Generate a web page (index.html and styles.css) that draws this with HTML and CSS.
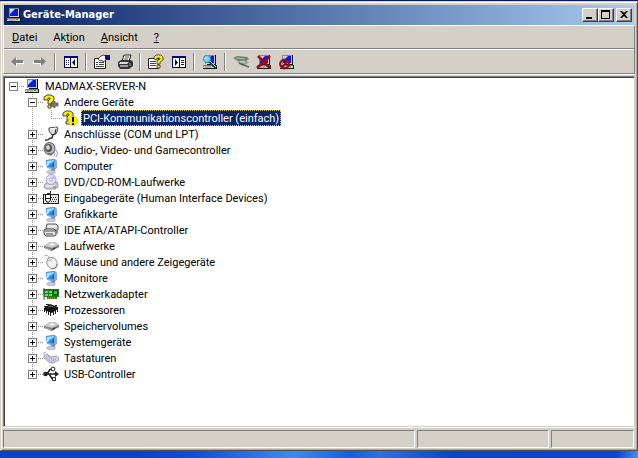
FILE: index.html
```html
<!DOCTYPE html>
<html lang="de">
<head>
<meta charset="utf-8">
<title>Geräte-Manager</title>
<link rel="stylesheet" href="styles.css">
</head>
<body>
<svg class="sprite" aria-hidden="true">
  <symbol id="pc" viewBox="0 0 16 16">
    <path d="M3 1H13V10H3Z" fill="#d4d0c8"/><path d="M3 1H13V2H4V10H3Z" fill="#888"/>
    <path d="M4 2H12V9H4Z" fill="#0818e8"/><path d="M4 2H9L4 7Z" fill="#b8d8ff"/>
    <path d="M13 1H14V11H5V10H13Z" fill="#111"/>
    <path d="M2 11H14V14H1V12Z" fill="#d4d0c8"/><path d="M2 11H14V12H2V13H1V12Z" fill="#777"/><path d="M1 14H15V15H1ZM14 11H15V15H14Z" fill="#111"/>
    <path d="M10 12H12V13H10Z" fill="#18b018"/><path d="M3 13H9" stroke="#888"/>
  </symbol>
  <symbol id="question" viewBox="0 0 16 16">
    <path d="M8 9L12 7V9H15V12H12V14L8 12Z" fill="#777" stroke="#444" stroke-width=".6"/>
    <path d="M1 5V3L4 1H8L11 3V6L8 9V10H5V7L7 5V4H5V6H1ZM5 11H8V14H5Z" fill="#fff200" stroke="#333" stroke-width=".9"/>
  </symbol>
  <symbol id="warning" viewBox="0 0 16 16">
    <path d="M1 5V3L4 1H8L11 3V6L8 9V10H5V7L7 5V4H5V6H1ZM4 11H8V14H4Z" fill="#fff200" stroke="#333" stroke-width=".9"/>
    <circle cx="11" cy="11" r="4.7" fill="#fff200" stroke="#b9ad00" stroke-width=".5"/>
    <path d="M10 7H12V12H10ZM10 13H12V15H10Z" fill="#111"/>
  </symbol>
  <symbol id="port" viewBox="0 0 16 16">
    <path d="M6 2L14 1L15 3L13 8L9 9L6 5Z" fill="#ddd" stroke="#444"/><path d="M7 3L13 2" stroke="#fff"/>
    <path d="M13 3L12 8L9 9" fill="none" stroke="#222"/>
    <path d="M10 9L9 12Q6 12 6 13T2 14" fill="none" stroke="#333" stroke-width="1.5"/>
  </symbol>
  <symbol id="audio" viewBox="0 0 16 16">
    <ellipse cx="6.500" cy="6.500" rx="5.500" ry="6" fill="#b8b8bc" stroke="#55555a"/>
    <ellipse cx="5.500" cy="6" rx="3.500" ry="4" fill="#55555a"/><ellipse cx="5" cy="5.500" rx="1.800" ry="2.200" fill="#ddd"/>
    <path d="M2 11L8 14L11 11" fill="#777"/><path d="M11 9Q13 11 11 14M13 8Q16 12 13 15" fill="none" stroke="#7f9dcc"/>
  </symbol>
  <symbol id="monitor" viewBox="0 0 16 16">
    <path d="M3 2L12 1L14 3V10L11 12L4 10Z" fill="#9aa9ca"/>
    <path d="M3 2L12 1L11 10L4 9Z" fill="#3296ee"/><path d="M4 3L11 2L10 4Q7 4 5 8H4Z" fill="#9ee8ff"/>
    <path d="M8 8L11 4V9Z" fill="#1267cf"/>
    <path d="M8 11L12 10V13L8 14Z" fill="#7885ad"/><ellipse cx="8" cy="14" rx="4.500" ry="1.700" fill="#c6cae2" stroke="#9298ba" stroke-width=".5"/>
  </symbol>
  <symbol id="disc" viewBox="0 0 16 16">
    <path d="M2 10L5 8H14L15 11V13L12 15H3L1 13Z" fill="#cccbd2" stroke="#77777f" stroke-width=".7"/>
    <circle cx="8" cy="5.500" r="5" fill="#e0e0f4" stroke="#9696b5" stroke-width=".8"/>
    <path d="M8 5L11 1L13 5Z" fill="#c5b9ef"/><circle cx="8" cy="5.500" r="1.500" fill="#fff" stroke="#8686a8" stroke-width=".6"/>
    <path d="M3 12H12" stroke="#fff"/><path d="M10 13H13" stroke="#666"/>
  </symbol>
  <symbol id="hid" viewBox="0 0 16 16">
    <path d="M0 4H16V14H0Z" fill="#222"/><path d="M1 5H15V13H1Z" fill="#e4e4e4"/>
    <path d="M8 7.500H14M9 9.500H14M8 11.500H14" stroke="#333" stroke-dasharray="1 1"/>
    <path d="M4.500 5V3.500H7.500V1" fill="none" stroke="#222"/><path d="M2.500 5V10L4 12H6L7.500 10V5" fill="#fff" stroke="#111"/><path d="M2 8.500H7" stroke="#111"/>
  </symbol>
  <symbol id="ide" viewBox="0 0 16 16">
    <path d="M4 2H13L15 4V8H5L3 6Z" fill="#ddd" stroke="#555"/><path d="M5 4H13" stroke="#fff"/>
    <path d="M2 7H11L13 9V13L11 14H3L1 12V8Z" fill="#e3e3e3" stroke="#444"/><path d="M2 9H12M3 12H10" stroke="#555"/><path d="M13 9L15 7V11L12 14" fill="#888"/>
  </symbol>
  <symbol id="drive" viewBox="0 0 16 16">
    <path d="M1 8L7 4H12L16 7V9L9 13L1 10Z" fill="#777"/><path d="M1 8L7 4H12L16 7L9 10Z" fill="#c9c9c9"/>
    <path d="M6 6L10 5L12 7L9 8Z" fill="#eee"/><path d="M2 9L8 11V12L2 10Z" fill="#aaa"/><path d="M10 11L12 10" stroke="#222"/>
  </symbol>
  <symbol id="mouse" viewBox="0 0 16 16">
    <path d="M1 2Q5 0 6 4" fill="none" stroke="#aaa"/>
    <ellipse cx="9" cy="9" rx="5" ry="6" transform="rotate(-25 9 9)" fill="#f1f1f2" stroke="#99999c"/>
    <path d="M4 7Q8 8 10 4M6 4L8 7" fill="none" stroke="#aaa" stroke-width=".8"/><path d="M9 15Q14 14 14 10" fill="none" stroke="#777"/>
  </symbol>
  <symbol id="network" viewBox="0 0 16 16">
    <path d="M0 3H16V11H14V13H4V11H1Z" fill="#147b20"/><path d="M2 5H5V7H2ZM6 5H9V7H6ZM2 8H5V10H2ZM6 8H9V10H6Z" fill="#76dd45"/>
    <path d="M10 4H15V9H10Z" fill="#075012"/><path d="M11 5H14V8H11Z" fill="#58b847"/><path d="M5 12H13" stroke="#e3c634" stroke-dasharray="1 1"/><path d="M1 2V14" stroke="#555"/>
  </symbol>
  <symbol id="cpu" viewBox="0 0 16 16">
    <path d="M1.500 6V10M3.500 7V11M5.500 9V13M7.500 10V14M10.500 10V13M12.500 8V12M14.500 7V10M1 4.500H4M3 2.500H6M12 3.500H14" stroke="#222"/>
    <path d="M1 6L7 2L15 5V7L9 11L1 8Z" fill="#151515"/><path d="M5 5L8 4L10 5" fill="none" stroke="#666"/>
  </symbol>
  <symbol id="keyboard" viewBox="0 0 16 16">
    <path d="M1 6L4 4L8 7L13 6L16 8V10L10 13H7L1 8Z" fill="#d7d7ec" stroke="#8383a8" stroke-width=".8"/>
    <path d="M3 6L8 10H13M5 6L9 9H14M3 8L7 11H12" fill="none" stroke="#9292b2" stroke-dasharray="1 1"/><path d="M1 5Q0 2 3 2" fill="none" stroke="#aaa"/>
  </symbol>
  <symbol id="usb" viewBox="0 0 16 16">
    <path d="M2 8H14M4 8L7 3.500H10M6 8L9 12.500H11" fill="none" stroke="#222" stroke-width="1.600"/>
    <circle cx="2.500" cy="8" r="2.300" fill="#222"/><path d="M12 5L16 8L12 11Z" fill="#222"/><circle cx="10" cy="3" r="1.900" fill="#fff" stroke="#222"/><path d="M9.500 11.500H12.500V14.500H9.500Z" fill="#fff" stroke="#222"/>
  </symbol>
  <symbol id="arrow" viewBox="0 0 16 16">
    <path d="M3 8L8 4V7H15V10H8V13Z" fill="#fff"/><path d="M2 7.500L7 3V6H14V9H7V12Z" fill="#808080"/>
  </symbol>
  <symbol id="panel" viewBox="0 0 16 16">
    <path d="M1 2H15V14H1Z" fill="#fff"/><path d="M1 2H15V14H1ZM2 4V13H7V4ZM8 4V13H14V4Z" fill="#000080" fill-rule="evenodd"/>
    <path d="M3 6.500H6M3 8.500H6M3 10.500H6" stroke="#222" stroke-dasharray="1 1"/><path d="M12 5V12L9 8.500Z" fill="#111"/>
  </symbol>
  <symbol id="props" viewBox="0 0 16 16">
    <path d="M.5 4.500H11.500V14.500H.5Z" fill="#fff" stroke="#222"/><path d="M2 8.500H4M5 8.500H10M2 10.500H4M5 10.500H10M2 12.500H10" stroke="#444"/>
    <path d="M4 5L7 2L10 1L12 3V6L9 8L8 6L6 7L5 6Z" fill="#fff" stroke="#222" stroke-width=".8"/><path d="M11 1H16V6H13L11 5Z" fill="#101080"/>
  </symbol>
  <symbol id="printer" viewBox="0 0 16 16">
    <path d="M5 7L7 1H14L12 7Z" fill="#fff" stroke="#222"/><path d="M8 3H12M7 5H11" stroke="#555"/>
    <path d="M1 8L4 6H14L16 8V12L12 15H3L1 12Z" fill="#333"/><path d="M3 8H12L10 10H2Z" fill="#ddd"/><path d="M3 12H11" stroke="#fff"/><path d="M13 9V12" stroke="#999"/>
  </symbol>
  <symbol id="help" viewBox="0 0 16 16">
    <path d="M.5 4.500H10.500V14.500H.5Z" fill="#fff" stroke="#222"/><path d="M2 7.500H8M2 9.500H8M2 11.500H8" stroke="#444"/>
    <path d="M6 5V3L8 1H13L15 3V6L12 8V10H9V7L12 5V4H9V6ZM9 11H12V14H9Z" fill="#fff200" stroke="#333" stroke-width=".8"/>
  </symbol>
  <symbol id="panelright" viewBox="0 0 16 16">
    <path d="M1 2H15V14H1Z" fill="#fff"/><path d="M1 2H15V14H1ZM2 4V13H8V4ZM9 4V13H14V4Z" fill="#000080" fill-rule="evenodd"/>
    <path d="M10 6.500H13M10 8.500H13M10 10.500H13" stroke="#222"/><path d="M4 5V12L7 8.500Z" fill="#111"/>
  </symbol>
  <symbol id="scan" viewBox="0 0 16 16">
    <use href="#pc"/><path d="M7 7L14 14" stroke="#104878" stroke-width="2.500"/><path d="M8 7L14 13" stroke="#8de0ef"/>
    <circle cx="5" cy="5" r="3.500" fill="#72d9ee" stroke="#458aa8"/><path d="M3 5L5 3" stroke="#fff"/>
  </symbol>
  <symbol id="update" viewBox="0 0 16 16">
    <path d="M0 4L4 2L14 3L16 5L13 7L5 7Z" fill="#668466"/><path d="M3 4L12 5" stroke="#aac0aa"/>
    <path d="M4 8L10 6L16 8L12 11L7 10Z" fill="#999"/><path d="M7 8L12 8" stroke="#ddd"/><path d="M8 10L16 13M6 9L10 11" stroke="#556655" stroke-width="1.500"/>
  </symbol>
  <symbol id="remove" viewBox="0 0 16 16">
    <use href="#pc"/><path d="M2 2L14 14M14 2L1 14" stroke="#a00814" stroke-width="2.600"/>
  </symbol>
  <symbol id="disable" viewBox="0 0 16 16">
    <use href="#pc"/><circle cx="5.500" cy="10" r="4.300" fill="none" stroke="#a00814" stroke-width="2.200"/><path d="M3 13L9 7" stroke="#a00814" stroke-width="2.200"/>
  </symbol>
</svg>
<main class="window">
  <header class="titlebar">
    <svg class="icon"><use href="#pc"/></svg>
    <h1>Geräte-Manager</h1>
    <div class="controls">
      <button aria-label="Minimieren"><svg viewBox="0 0 12 10"><path d="M2 7H8V9H2Z"/></svg></button>
      <button aria-label="Maximieren"><svg viewBox="0 0 12 10"><path d="M1 0H10V9H1ZM2 2V8H9V2Z" fill-rule="evenodd"/></svg></button>
      <button class="close" aria-label="Schließen"><svg viewBox="0 0 12 10"><path d="M2 1H4L6 3L8 1H10L7 4.500L10 8H8L6 6L4 8H2L5 4.500Z"/></svg></button>
    </div>
  </header>
  <div class="bars">
    <nav class="menu">
      <button><u>D</u>atei</button><button>Ak<u>t</u>ion</button><button><u>A</u>nsicht</button><button><u>?</u></button>
    </nav>
    <div class="toolbar" role="toolbar" aria-label="Symbolleiste">
      <button aria-label="Zurück"><svg class="icon"><use href="#arrow"/></svg></button>
      <button aria-label="Vorwärts"><svg class="icon flip"><use href="#arrow"/></svg></button>
      <span class="sep"></span>
      <button aria-label="Konsolenstruktur"><svg class="icon"><use href="#panel"/></svg></button>
      <span class="sep"></span>
      <button aria-label="Eigenschaften"><svg class="icon"><use href="#props"/></svg></button>
      <button aria-label="Drucken"><svg class="icon"><use href="#printer"/></svg></button>
      <span class="sep"></span>
      <button aria-label="Hilfe"><svg class="icon"><use href="#help"/></svg></button>
      <button aria-label="Aktionsbereich"><svg class="icon"><use href="#panelright"/></svg></button>
      <span class="sep"></span>
      <button aria-label="Nach geänderter Hardware suchen"><svg class="icon"><use href="#scan"/></svg></button>
      <span class="sep"></span>
      <button aria-label="Treiber aktualisieren"><svg class="icon"><use href="#update"/></svg></button>
      <button aria-label="Deinstallieren"><svg class="icon"><use href="#remove"/></svg></button>
      <button aria-label="Deaktivieren"><svg class="icon"><use href="#disable"/></svg></button>
    </div>
  </div>
  <section class="content">
    <ul class="tree">
      <li>
        <div class="row root"><span class="twig"><button class="toggle" aria-label="Zuklappen"></button></span><svg class="icon"><use href="#pc"/></svg><span class="label">MADMAX-SERVER-N</span></div>
        <ul>
          <li>
            <div class="row"><span class="twig"><button class="toggle" aria-label="Zuklappen"></button></span><svg class="icon"><use href="#question"/></svg><span class="label">Andere Geräte</span></div>
            <ul class="through">
              <li><div class="row last"><span class="twig"></span><svg class="icon"><use href="#warning"/></svg><span class="label selected">PCI-Kommunikationscontroller (einfach)</span></div></li>
            </ul>
          </li>
          <li><div class="row"><span class="twig"><button class="toggle plus" aria-label="Aufklappen"></button></span><svg class="icon"><use href="#port"/></svg><span class="label">Anschlüsse (COM und LPT)</span></div></li>
          <li><div class="row"><span class="twig"><button class="toggle plus" aria-label="Aufklappen"></button></span><svg class="icon"><use href="#audio"/></svg><span class="label">Audio-, Video- und Gamecontroller</span></div></li>
          <li><div class="row"><span class="twig"><button class="toggle plus" aria-label="Aufklappen"></button></span><svg class="icon"><use href="#monitor"/></svg><span class="label">Computer</span></div></li>
          <li><div class="row"><span class="twig"><button class="toggle plus" aria-label="Aufklappen"></button></span><svg class="icon"><use href="#disc"/></svg><span class="label">DVD/CD-ROM-Laufwerke</span></div></li>
          <li><div class="row"><span class="twig"><button class="toggle plus" aria-label="Aufklappen"></button></span><svg class="icon"><use href="#hid"/></svg><span class="label">Eingabegeräte (Human Interface Devices)</span></div></li>
          <li><div class="row"><span class="twig"><button class="toggle plus" aria-label="Aufklappen"></button></span><svg class="icon"><use href="#monitor"/></svg><span class="label">Grafikkarte</span></div></li>
          <li><div class="row"><span class="twig"><button class="toggle plus" aria-label="Aufklappen"></button></span><svg class="icon"><use href="#ide"/></svg><span class="label">IDE ATA/ATAPI-Controller</span></div></li>
          <li><div class="row"><span class="twig"><button class="toggle plus" aria-label="Aufklappen"></button></span><svg class="icon"><use href="#drive"/></svg><span class="label">Laufwerke</span></div></li>
          <li><div class="row"><span class="twig"><button class="toggle plus" aria-label="Aufklappen"></button></span><svg class="icon"><use href="#mouse"/></svg><span class="label">Mäuse und andere Zeigegeräte</span></div></li>
          <li><div class="row"><span class="twig"><button class="toggle plus" aria-label="Aufklappen"></button></span><svg class="icon"><use href="#monitor"/></svg><span class="label">Monitore</span></div></li>
          <li><div class="row"><span class="twig"><button class="toggle plus" aria-label="Aufklappen"></button></span><svg class="icon"><use href="#network"/></svg><span class="label">Netzwerkadapter</span></div></li>
          <li><div class="row"><span class="twig"><button class="toggle plus" aria-label="Aufklappen"></button></span><svg class="icon"><use href="#cpu"/></svg><span class="label">Prozessoren</span></div></li>
          <li><div class="row"><span class="twig"><button class="toggle plus" aria-label="Aufklappen"></button></span><svg class="icon"><use href="#drive"/></svg><span class="label">Speichervolumes</span></div></li>
          <li><div class="row"><span class="twig"><button class="toggle plus" aria-label="Aufklappen"></button></span><svg class="icon"><use href="#monitor"/></svg><span class="label">Systemgeräte</span></div></li>
          <li><div class="row"><span class="twig"><button class="toggle plus" aria-label="Aufklappen"></button></span><svg class="icon"><use href="#keyboard"/></svg><span class="label">Tastaturen</span></div></li>
          <li><div class="row last"><span class="twig"><button class="toggle plus" aria-label="Aufklappen"></button></span><svg class="icon"><use href="#usb"/></svg><span class="label">USB-Controller</span></div></li>
        </ul>
      </li>
    </ul>
  </section>
  <footer class="status"><span></span><span></span><span></span></footer>
</main>
</body>
</html>
```
FILE: styles.css
```css
* { box-sizing: border-box; }

body {
  margin: 0;
  min-height: 100vh;
  padding: 1px 0 7px;
  display: flex;
  background: linear-gradient(#0a1a5c 0 2px, transparent 2px),
    linear-gradient(100deg, #0842c8 0 30%, #0c4fd6 38%, #3f8af0 52%, #1060e0 60%, #2f70e0 64%, #0846c8 74%, #0848d0 97%, #4a90f0);
  color: #000;
  font: 11px/18px Tahoma, Roboto, sans-serif;
}

button { padding: 0; border: 0; background: none; color: inherit; font: inherit; }
ul { margin: 0; padding: 0; list-style: none; }
.sprite { position: absolute; width: 0; height: 0; }
.icon { display: block; flex: none; width: 16px; height: 16px; }
.flip { transform: scaleX(-1); }

.window {
  flex: 1;
  min-width: 0;
  display: flex;
  flex-direction: column;
  padding: 2px;
  background: #d4d0c8;
  border: 1px solid;
  border-color: #d4d0c8 #505050 #505050 #d4d0c8;
  box-shadow: inset 1px 1px #fff, inset -1px -1px #aaa69e;
}

.titlebar {
  display: flex;
  align-items: center;
  height: 20px;
  margin: 1px 1px 0;
  padding: 0 2px;
  background: linear-gradient(90deg, #0a246a, #a6caf0);
  color: #fff;
}
.titlebar h1 { flex: 1; margin: 0 0 0 1px; font: bold 11px/18px Tahoma, "DejaVu Sans Condensed", sans-serif; }
.controls { display: flex; color: #000; }
.controls button {
  width: 16px;
  height: 14px;
  padding: 1px;
  background: #d4d0c8;
  border: 1px solid;
  border-color: #fff #404040 #404040 #fff;
  box-shadow: inset -1px -1px #808080;
}
.controls svg { display: block; width: 12px; height: 10px; }
.controls .close { margin-left: 2px; }

.bars {
  margin-bottom: 2px;
  border: 1px solid;
  border-color: #fff #808080 #808080 #fff;
  box-shadow: 0 1px #fff;
}
.menu { display: flex; align-items: center; height: 23px; padding-top: 2px; border-bottom: 1px solid #808080; }
.menu button { padding: 0 8px; }
.toolbar { display: flex; align-items: center; height: 24px; padding-left: 1px; border-top: 1px solid #fff; }
.toolbar button { display: grid; place-items: center; width: 23px; height: 22px; }
.sep { width: 2px; height: 18px; margin: 0 3px; border-left: 1px solid #808080; border-right: 1px solid #fff; }

.content {
  flex: 1;
  padding-top: 1px;
  background: #fff;
  border: 1px solid;
  border-color: #808080 #d4d0c8 #d4d0c8 #808080;
  box-shadow: inset 1px 1px #404040, 0 1px #fff;
}
.tree { padding-left: 1px; }
.tree ul { padding-left: 19px; }
.row { display: flex; height: 16px; }
.label { margin-left: 3px; padding: 0 2px; white-space: nowrap; }
.selected { background: #0a246a; color: #fff; outline: 1px dotted #d8c860; outline-offset: -1px; }

.twig {
  flex: none;
  width: 19px;
  padding: 4px 0 0 4px;
  background:
    repeating-linear-gradient(#999 0 1px, transparent 1px 2px) 8px 0 / 1px 100% no-repeat,
    repeating-linear-gradient(90deg, #999 0 1px, transparent 1px 2px) 8px 8px / 11px 1px no-repeat;
}
.last .twig { background-size: 1px 8px, 11px 1px; }
.root .twig { background-size: 0 0, 11px 1px; }
.through { background: repeating-linear-gradient(#999 0 1px, transparent 1px 2px) 8px 0 / 1px 100% no-repeat; }
.toggle {
  display: block;
  width: 9px;
  height: 9px;
  border: 1px solid #808080;
  background: linear-gradient(#000, #000) 1px 3px / 5px 1px no-repeat, #fff;
}
.plus {
  background: linear-gradient(#000, #000) 1px 3px / 5px 1px no-repeat,
    linear-gradient(#000, #000) 3px 1px / 1px 5px no-repeat, #fff;
}

.status { display: grid; grid-template-columns: 1fr 132px 83px; gap: 2px; margin: 3px 1px 0 0; }
.status span { height: 18px; border: 1px solid; border-color: #808080 #fff #fff #808080; }
```
